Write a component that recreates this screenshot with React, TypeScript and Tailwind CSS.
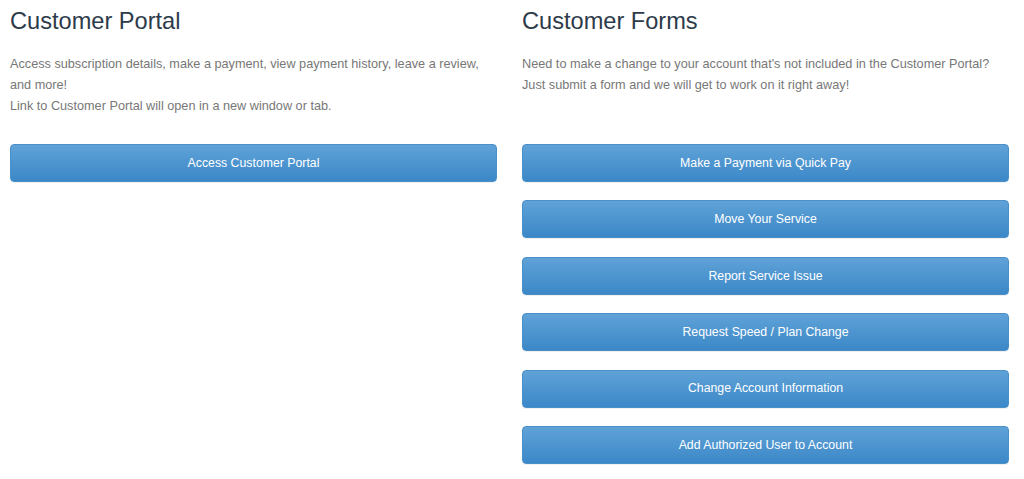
import React from 'react';

const FORMS = [
  'Make a Payment via Quick Pay',
  'Move Your Service',
  'Report Service Issue',
  'Request Speed / Plan Change',
  'Change Account Information',
  'Add Authorized User to Account',
];

const BlueButton: React.FC<{ label: string }> = ({ label }) => (
  <a
    href="#"
    className="flex h-[38px] w-full items-center justify-center rounded-[4px] border border-[#4a8fc8] bg-gradient-to-b from-[#5fa2d7] to-[#3b88c8] text-[12.3px] text-white shadow-[0_1px_0_rgba(0,0,0,0.06)]"
  >
    {label}
  </a>
);

export default function App() {
  return (
    <div className="h-[479px] w-[1024px] bg-white font-['Liberation_Sans',Arial,sans-serif]">
      <div className="grid grid-cols-[487px_487px] gap-x-[25px] pl-[10px] pt-[6px]">
        {/* Left column */}
        <div>
          <h2 className="text-[23.6px] leading-[30px] text-[#2d3a4a]">Customer Portal</h2>
          <p className="mt-[18px] text-[12.7px] leading-[21px] text-[#777]">
            Access subscription details, make a payment, view payment history, leave a review,
            and more!
            <br />
            Link to Customer Portal will open in a new window or tab.
          </p>
          <div className="mt-[27px]">
            <BlueButton label="Access Customer Portal" />
          </div>
        </div>

        {/* Right column */}
        <div>
          <h2 className="text-[23.6px] leading-[30px] text-[#2d3a4a]">Customer Forms</h2>
          <p className="mt-[18px] text-[12.7px] leading-[21px] text-[#777]">
            Need to make a change to your account that's not included in the Customer Portal?
            <br />
            Just submit a form and we will get to work on it right away!
          </p>
          <div className="mt-[48px] flex flex-col gap-[18.4px]">
            {FORMS.map((f) => (
              <BlueButton key={f} label={f} />
            ))}
          </div>
        </div>
      </div>
    </div>
  );
}
